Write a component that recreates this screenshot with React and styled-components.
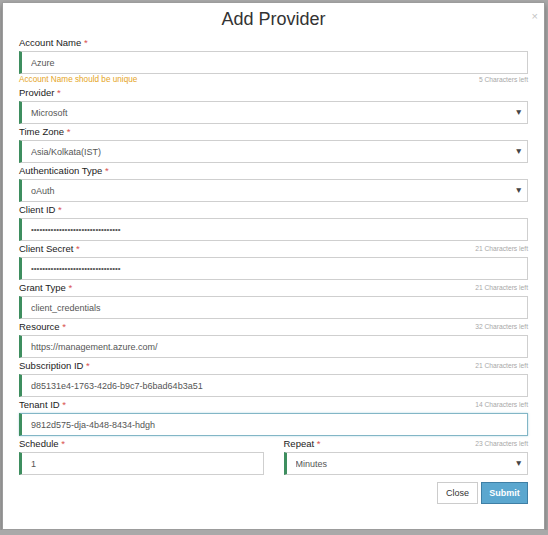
import React, { useEffect, useRef } from "react";
import styled, { createGlobalStyle } from "styled-components";

const GlobalStyle = createGlobalStyle`
  html, body {
    margin: 0;
    padding: 0;
    background: #a9a9a9;
    font-family: "Liberation Sans", Arial, sans-serif;
  }
`;

const Modal = styled.div`
  box-sizing: border-box;
  margin: 2px 3px 0 2px;
  height: 528px;
  background: #fff;
  border: 1px solid #9c9c9c;
  box-shadow: 0 3px 6px rgba(0, 0, 0, 0.35);
  display: flex;
  flex-direction: column;
`;

const Header = styled.div`
  position: relative;
  height: 32px;
  display: flex;
  align-items: center;
  justify-content: center;
`;

const Title = styled.h4`
  margin: 0;
  font-size: 18px;
  font-weight: 400;
  color: #333;
`;

const CloseX = styled.span`
  position: absolute;
  right: 6px;
  top: 7px;
  font-size: 11px;
  color: #c4c4c4;
`;

const Form = styled.form`
  padding: 0 16px 0 16px;
  display: flex;
  flex-direction: column;
`;

const LabelRow = styled.div`
  height: 16px;
  display: flex;
  align-items: center;
  justify-content: space-between;
  padding-bottom: 2px;
  box-sizing: border-box;
`;

const Label = styled.label`
  font-size: 9.5px;
  color: #222;
`;

const Req = styled.span`
  color: #d9534f;
`;

const Note = styled.span`
  font-size: 6.7px;
  color: #a8a8a8;
`;

const HelpRow = styled.div`
  height: 11px;
  display: flex;
  align-items: center;
  justify-content: space-between;
`;

const Warn = styled.span`
  font-size: 8.2px;
  color: #e5a526;
`;

const Control = styled.div`
  position: relative;
`;

const Input = styled.input`
  box-sizing: border-box;
  width: 100%;
  height: 23px;
  margin: 0;
  padding: 0 24px 0 9px;
  border: 1px solid ${props => (props.$focused ? "#82b6c6" : "#cfcfcf")};
  border-left: 3px solid #3e8e5f;
  border-radius: 0;
  background: #fff;
  font-family: "Liberation Sans", Arial, sans-serif;
  font-size: ${props => (props.type === "password" ? "8px" : "9px")};
  color: #555;
  outline: none;
  box-shadow: ${props => (props.$focused ? "0 0 2px rgba(102, 175, 200, 0.5)" : "none")};
`;

const Select = styled.select`
  box-sizing: border-box;
  width: 100%;
  height: 23px;
  margin: 0;
  padding: 0 24px 0 9px;
  border: 1px solid #cfcfcf;
  border-left: 3px solid #3e8e5f;
  border-radius: 0;
  background: #fff;
  font-family: "Liberation Sans", Arial, sans-serif;
  font-size: 9px;
  color: #555;
  appearance: none;
  outline: none;
`;

const Arrow = styled.span`
  position: absolute;
  right: 5px;
  top: 6px;
  font-size: 8.5px;
  color: #444;
  pointer-events: none;
`;

const SplitRow = styled.div`
  display: grid;
  grid-template-columns: 1fr 1fr;
  column-gap: 20px;
`;

const Footer = styled.div`
  display: flex;
  justify-content: flex-end;
  gap: 3px;
  margin-top: 7px;
`;

const Button = styled.button`
  box-sizing: border-box;
  height: 22px;
  width: ${props => (props.$primary ? "47px" : "41px")};
  padding: 0;
  font-family: "Liberation Sans", Arial, sans-serif;
  font-size: 9px;
  font-weight: ${props => (props.$primary ? 700 : 400)};
  color: ${props => (props.$primary ? "#fff" : "#333")};
  background: ${props => (props.$primary ? "#5ba7cf" : "#fff")};
  border: 1px solid ${props => (props.$primary ? "#3f7fa5" : "#cccccc")};
  border-radius: 0;
`;

const dots = "a".repeat(32);

const fields = [
  { label: "Account Name", value: "Azure", warn: "Account Name should be unique", help: "5 Characters left" },
  { label: "Provider", value: "Microsoft", select: true },
  { label: "Time Zone", value: "Asia/Kolkata(IST)", select: true },
  { label: "Authentication Type", value: "oAuth", select: true },
  { label: "Client ID", value: dots, password: true },
  { label: "Client Secret", value: dots, password: true, note: "21 Characters left" },
  { label: "Grant Type", value: "client_credentials", note: "21 Characters left" },
  { label: "Resource", value: "https://management.azure.com/", note: "32 Characters left" },
  { label: "Subscription ID", value: "d85131e4-1763-42d6-b9c7-b6bad64b3a51", note: "21 Characters left" },
  { label: "Tenant ID", value: "9812d575-dja-4b48-8434-hdgh", note: "14 Characters left", focused: true }
];

const FieldControl = ({ value, select, password, focused }) => {
  const ref = useRef(null);

  useEffect(() => {
    if (focused && ref.current) {
      ref.current.focus();
      ref.current.setSelectionRange(value.length, value.length);
    }
  }, [focused, value]);

  if (select) {
    return (
      <Control>
        <Select value={value} onChange={() => {}}>
          <option>{value}</option>
        </Select>
        <Arrow>▼</Arrow>
      </Control>
    );
  }

  return (
    <Control>
      <Input
        ref={ref}
        type={password ? "password" : "text"}
        value={value}
        $focused={focused}
        readOnly
      />
    </Control>
  );
};

const Field = ({ label, note, warn, help, ...rest }) => (
  <div>
    <LabelRow>
      <Label>
        {label} <Req>*</Req>
      </Label>
      {note && <Note>{note}</Note>}
    </LabelRow>
    <FieldControl {...rest} />
    {(warn || help) && (
      <HelpRow>
        <Warn>{warn}</Warn>
        <Note>{help}</Note>
      </HelpRow>
    )}
  </div>
);

const App = () => (
  <>
    <GlobalStyle />
    <Modal>
      <Header>
        <Title>Add Provider</Title>
        <CloseX>×</CloseX>
      </Header>
      <Form onSubmit={e => e.preventDefault()}>
        {fields.map(f => (
          <Field key={f.label} {...f} />
        ))}
        <SplitRow>
          <Field label="Schedule" value="1" />
          <Field label="Repeat" value="Minutes" select note="23 Characters left" />
        </SplitRow>
        <Footer>
          <Button type="button">Close</Button>
          <Button type="submit" $primary>
            Submit
          </Button>
        </Footer>
      </Form>
    </Modal>
  </>
);

export default App;
